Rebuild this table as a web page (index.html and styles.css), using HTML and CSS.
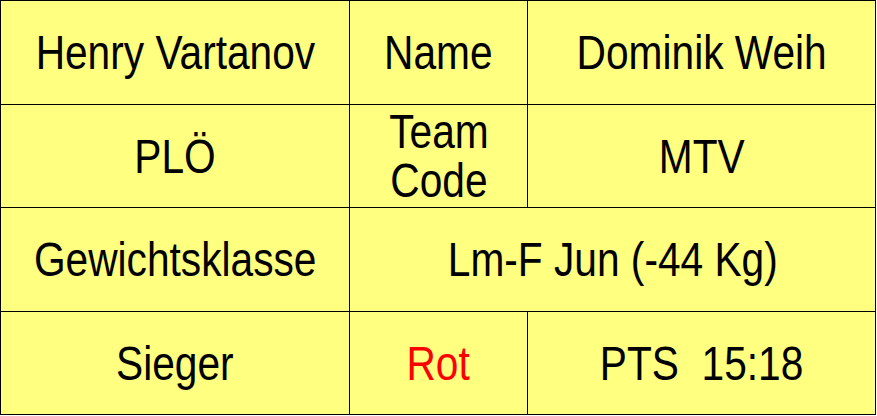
FILE: index.html
```html
<!DOCTYPE html>
<html>
<head>
<meta charset="utf-8">
<link rel="stylesheet" href="styles.css">
</head>
<body>
<div class="board">
  <div class="cell"><span class="txt">Henry Vartanov</span></div>
  <div class="cell"><span class="txt">Name</span></div>
  <div class="cell"><span class="txt">Dominik Weih</span></div>
  <div class="cell"><span class="txt">PLÖ</span></div>
  <div class="cell"><span class="txt">Team<br>Code</span></div>
  <div class="cell"><span class="txt">MTV</span></div>
  <div class="cell"><span class="txt">Gewichtsklasse</span></div>
  <div class="cell span2"><span class="txt">Lm-F Jun (-44 Kg)</span></div>
  <div class="cell"><span class="txt">Sieger</span></div>
  <div class="cell red"><span class="txt">Rot</span></div>
  <div class="cell"><span class="txt">PTS&nbsp;&nbsp;15:18</span></div>
</div>
</body>
</html>
```

FILE: styles.css
```css
html, body {
  margin: 0;
  padding: 0;
  background: #ffffff;
}
.board {
  display: grid;
  grid-template-columns: 348px 177px 347px;
  grid-template-rows: 103px 102px 103px 102px;
  gap: 1px;
  padding: 1px;
  width: 874px;
  background: #000000;
}
.cell {
  background: #ffff80;
  display: flex;
  align-items: center;
  justify-content: center;
  text-align: center;
  font-family: "Liberation Sans Narrow", "Arial Narrow", "Liberation Sans", sans-serif;
  font-size: 49px;
  line-height: 49px;
  color: #000000;
  overflow: hidden;
}
.txt {
  display: inline-block;
  white-space: nowrap;
  transform: scaleX(0.83);
  transform-origin: center;
}
.span2 {
  grid-column: span 2;
}
.red {
  color: #ff0000;
}
```
